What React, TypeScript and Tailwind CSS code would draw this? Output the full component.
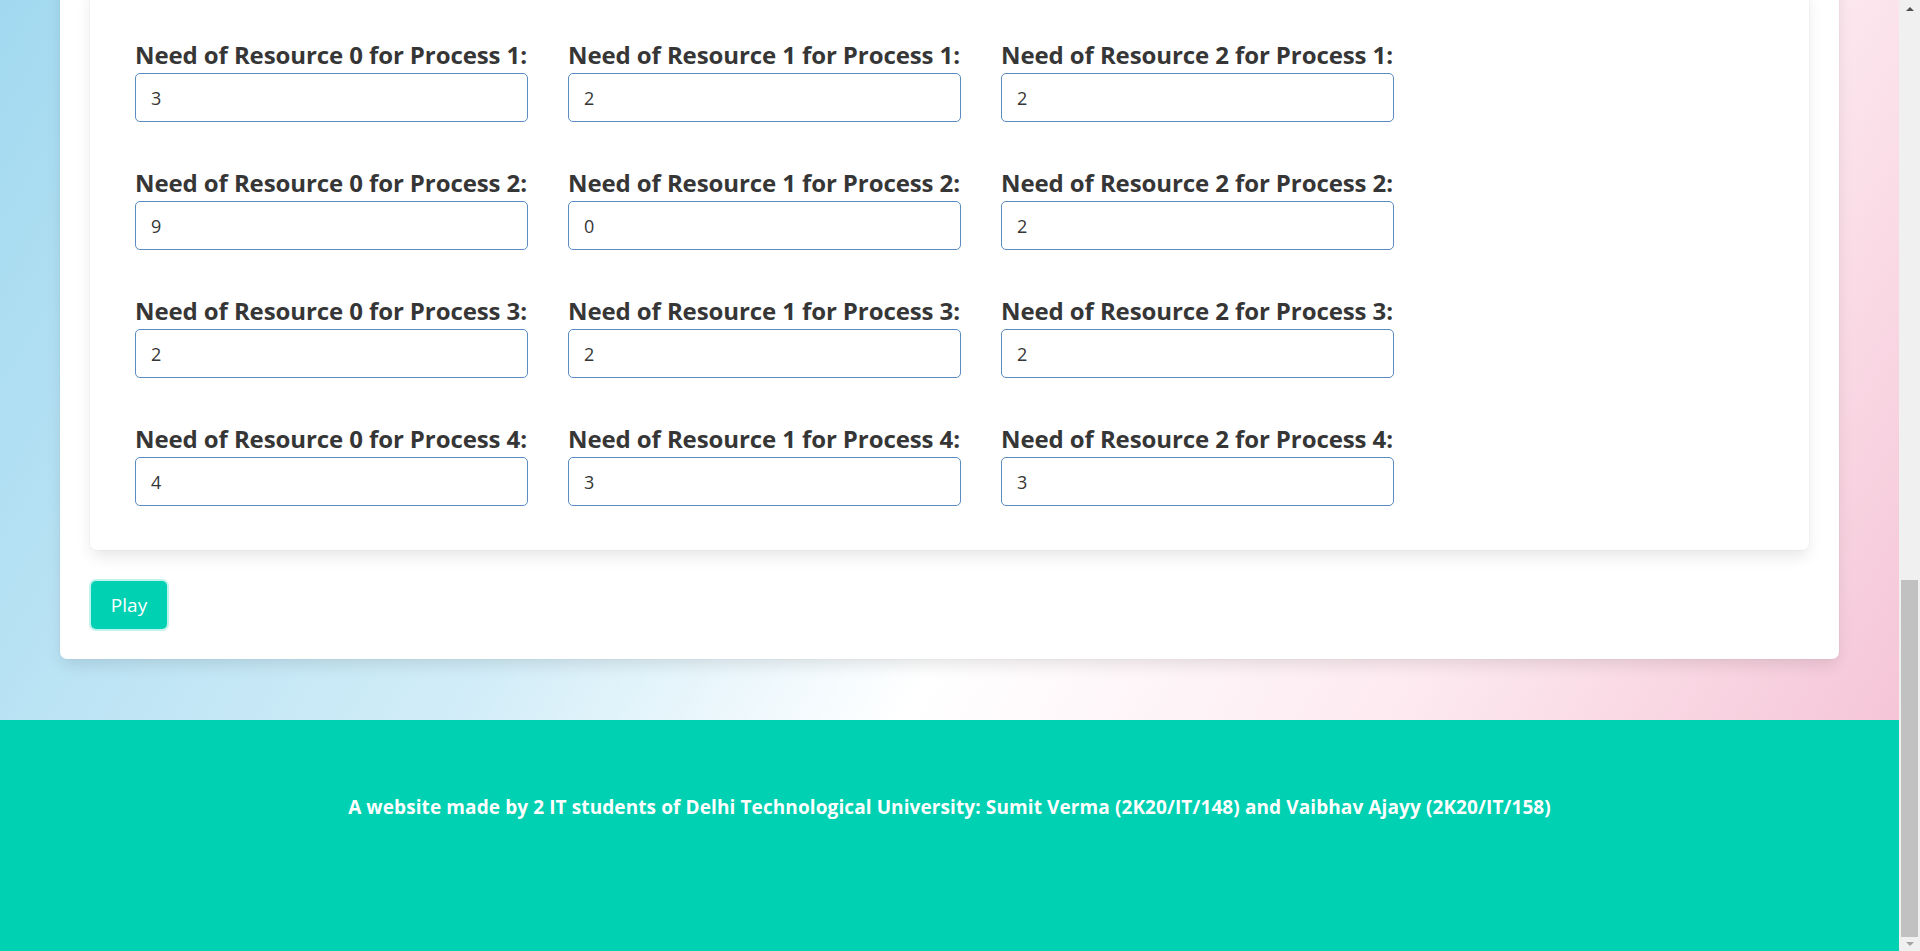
import React from "react";

// need matrix: rows = processes 1..4, cols = resources 0..2
const needs = [
  [3, 2, 2],
  [9, 0, 2],
  [2, 2, 2],
  [4, 3, 3],
];

function ScrollBar() {
  return (
    <div className="flex w-[21px] flex-col bg-[#f0f0f0]">
      <div className="flex h-[17px] items-center justify-center">
        <div className="h-0 w-0 border-x-[4px] border-b-[4px] border-x-transparent border-b-[#505050]" />
      </div>
      <div className="h-[563px]" />
      <div className="mx-[2px] h-[357px] bg-[#c1c1c1]" />
      <div className="flex flex-1 items-center justify-center">
        <div className="h-0 w-0 border-x-[4px] border-t-[4px] border-x-transparent border-t-[#a3a3a3]" />
      </div>
    </div>
  );
}

export default function App() {
  return (
    <div className="flex h-[951px] w-full overflow-hidden font-['Open_Sans',sans-serif] text-[#363636]">
      <div className="flex min-w-0 flex-1 flex-col">
        <section className="flex flex-col bg-[linear-gradient(120deg,#a2d9f0_0%,#d2edf8_38%,#ffffff_57%,#fdeaf0_78%,#f5c5d7_100%)] px-[60px] pb-[61px]">
          <div className="mt-[-44px] rounded-[7px] bg-white p-[30px] shadow-[0_8px_16px_-2px_rgba(10,10,10,0.1),0_0_0_1px_rgba(10,10,10,0.02)]">
            <div className="rounded-[7px] bg-white px-[45px] pt-[51px] pb-[44px] shadow-[0_8px_16px_-2px_rgba(10,10,10,0.1),0_0_0_1px_rgba(10,10,10,0.02)]">
              <div className="grid grid-cols-[393px_393px_393px] gap-x-[40px] gap-y-[43px]">
                {needs.map((row, p) =>
                  row.map((v, r) => (
                    <div key={p + "-" + r} className="flex flex-col">
                      <label className="h-[36px] whitespace-nowrap text-[24px] leading-[36px] font-bold tracking-[-0.1px] text-[#363636]">
                        Need of Resource {r} for Process {p + 1}:
                      </label>
                      <input
                        readOnly
                        value={v}
                        className="h-[49px] w-full rounded-[5px] border border-[#5a8cbf] bg-white px-[15px] text-[18px] text-[#363636] outline-none"
                      />
                    </div>
                  ))
                )}
              </div>
            </div>
            <button className="mt-[31px] ml-[1px] h-[48px] w-[76px] rounded-[5px] bg-[#00d1b2] text-[19px] text-white shadow-[0_0_0_2px_rgba(0,209,178,0.25)]">
              Play
            </button>
          </div>
        </section>
        <footer className="flex-1 bg-[#00d1b2] pt-[72px] text-center">
          <p className="text-[19px] leading-[30px] font-bold tracking-[0.1px] text-white">
            A website made by 2 IT students of Delhi Technological University: Sumit Verma (2K20/IT/148) and Vaibhav Ajayy (2K20/IT/158)
          </p>
        </footer>
      </div>
      <ScrollBar />
    </div>
  );
}
